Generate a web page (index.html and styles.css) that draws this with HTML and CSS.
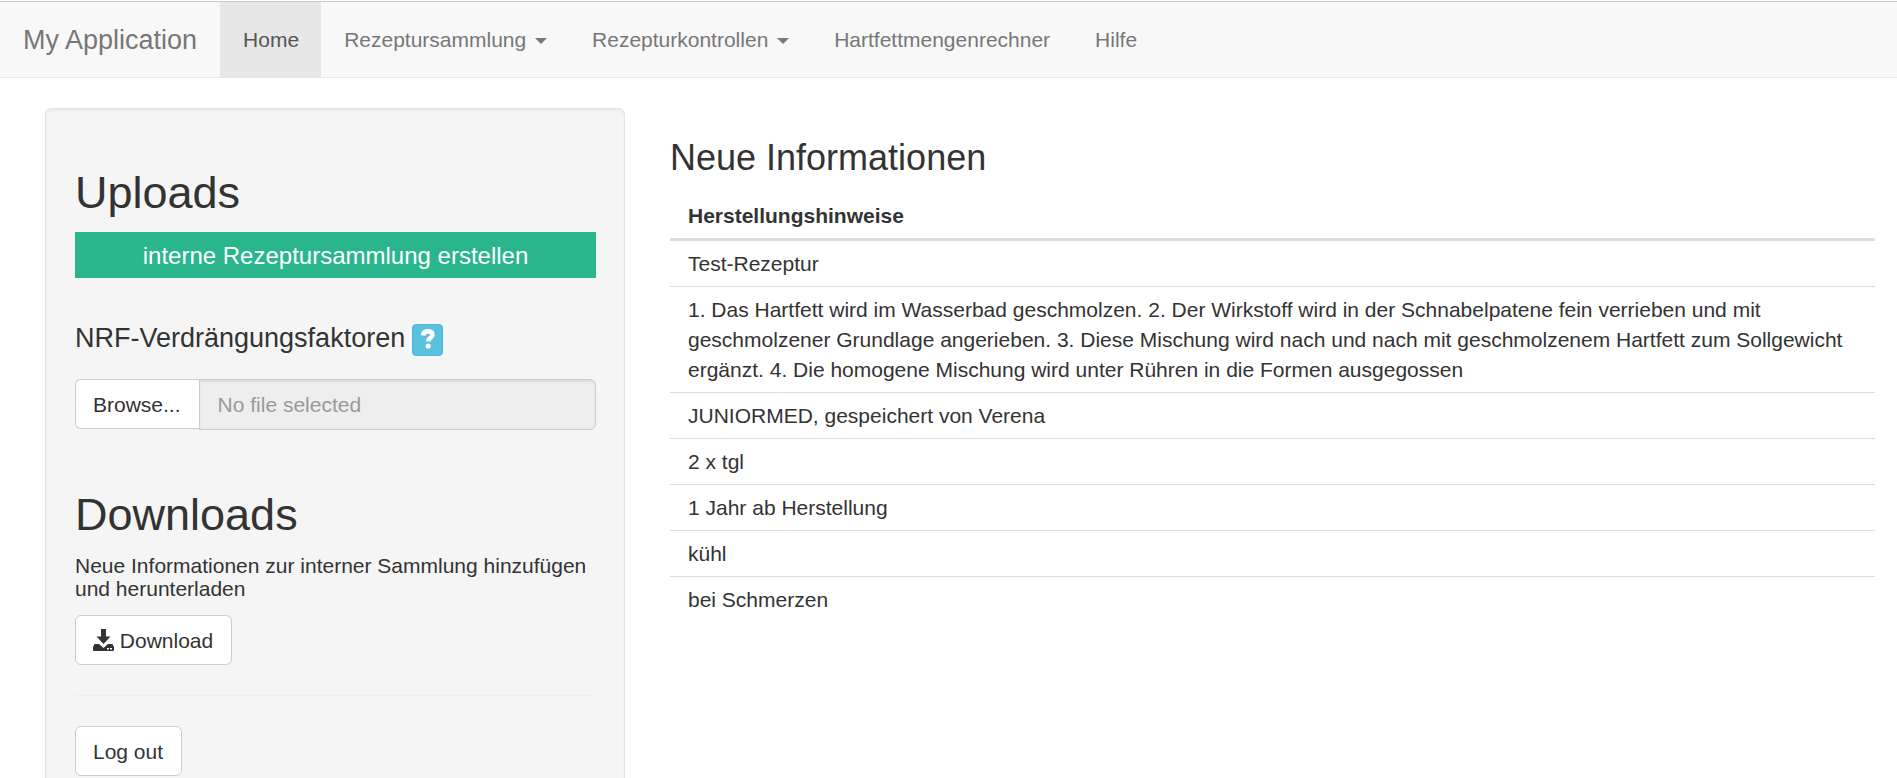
FILE: index.html
```html
<!DOCTYPE html>
<html lang="de">
<head>
<meta charset="utf-8">
<title>My Application</title>
<link rel="stylesheet" href="styles.css">
</head>
<body>
<nav class="navbar">
  <a class="brand" href="#">My Application</a>
  <a class="nav-link active" href="#">Home</a>
  <a class="nav-link" href="#">Rezeptursammlung <span class="caret"></span></a>
  <a class="nav-link" href="#">Rezepturkontrollen <span class="caret"></span></a>
  <a class="nav-link" href="#">Hartfettmengenrechner</a>
  <a class="nav-link" href="#">Hilfe</a>
</nav>
<div class="layout">
  <aside class="sidebar">
    <div class="well">
      <h2 class="section-title">Uploads</h2>
      <button class="create" type="button">interne Rezeptursammlung erstellen</button>
      <div class="upload-head">
        <label class="upload-label" for="file-name">NRF-Verdrängungsfaktoren</label>
        <button class="help" type="button" aria-label="Hilfe">
          <svg width="14" height="20" viewBox="0 0 14 20" fill="none" stroke="#fff"><path d="M2 6.500C2.300 3.600 4.200 2.400 6.800 2.400c2.800 0 4.600 1.300 4.600 3.500 0 3-4.200 3-4.200 6.600" stroke-width="4.600"/><circle cx="7.200" cy="17" r="2.600" fill="#fff" stroke="none"/></svg>
        </button>
      </div>
      <div class="file-group">
        <button class="btn browse" type="button">Browse...</button>
        <input class="file-name" id="file-name" type="text" placeholder="No file selected" readonly>
      </div>
      <h2 class="section-title">Downloads</h2>
      <h5 class="note">Neue Informationen zur interner Sammlung hinzufügen und herunterladen</h5>
      <button class="btn" type="button"><svg class="icon" width="21" height="22" viewBox="0 0 21 22" fill="#333"><path d="M8 0h5v7.500h4.500L10.500 15l-7-7.500H8z"/><path d="M1.500 15H6l4.500 4 4.500-4h4.500l1.500 3v3q0 1-1 1H1q-1 0-1-1v-3z"/><path fill="#fff" d="M14 19h2v1.500h-2zM17 19h2v1.500h-2z"/></svg> Download</button>
      <hr class="rule">
      <button class="btn" type="button">Log out</button>
    </div>
  </aside>
  <main class="main">
    <h3 class="main-title">Neue Informationen</h3>
    <table class="table">
      <thead><tr><th>Herstellungshinweise</th></tr></thead>
      <tbody>
        <tr><td>Test-Rezeptur</td></tr>
        <tr><td>1. Das Hartfett wird im Wasserbad geschmolzen. 2. Der Wirkstoff wird in der Schnabelpatene fein verrieben und mit geschmolzener Grundlage angerieben. 3. Diese Mischung wird nach und nach mit geschmolzenem Hartfett zum Sollgewicht ergänzt. 4. Die homogene Mischung wird unter Rühren in die Formen ausgegossen</td></tr>
        <tr><td>JUNIORMED, gespeichert von Verena</td></tr>
        <tr><td>2 x tgl</td></tr>
        <tr><td>1 Jahr ab Herstellung</td></tr>
        <tr><td>kühl</td></tr>
        <tr><td>bei Schmerzen</td></tr>
      </tbody>
    </table>
  </main>
</div>
</body>
</html>
```
FILE: styles.css
```css
* { box-sizing: border-box; }
html { scrollbar-width: none; }
body {
  margin: 0;
  padding-top: 1px;
  background: #fff;
  color: #333;
  font: 21px/30px "Liberation Sans", Arial, sans-serif;
}
button, input { font: inherit; color: inherit; }
.navbar {
  display: flex;
  height: 77px;
  border-top: 1px solid #c8cac9;
  border-bottom: 1px solid #e7e7e7;
  background: #f8f8f8;
}
.brand, .nav-link {
  padding: 23px 22px 22px 23px;
  color: #777;
  text-decoration: none;
  white-space: nowrap;
}
.brand { padding-right: 23px; font-size: 27px; }
.active { background: #e7e7e7; color: #555; }
.caret {
  display: inline-block;
  margin-left: 3px;
  border-top: 6px solid;
  border-left: 6px solid transparent;
  border-right: 6px solid transparent;
  vertical-align: middle;
}
.layout {
  display: grid;
  grid-template-columns: 1fr 2fr;
  padding: 30px 0 0 22px;
}
.sidebar, .main { padding: 0 22px 0 23px; }
.well {
  min-height: 30px;
  padding: 29px 28px 29px 29px;
  border: 1px solid #e3e3e3;
  border-radius: 6px;
  background: #f5f5f5;
  box-shadow: inset 0 2px 2px rgba(0, 0, 0, 0.05);
}
.section-title {
  margin: 30px 0 15px;
  font-size: 45px;
  font-weight: 400;
  line-height: 49px;
}
.create {
  display: block;
  width: 100%;
  padding: 9px 8px 7px;
  border: 0;
  background: #29b68d;
  color: #fff;
  font-size: 24px;
  text-align: center;
}
.upload-head {
  display: flex;
  align-items: flex-end;
  gap: 7px;
  padding-top: 45px;
}
.upload-label { padding-bottom: 3px; font-size: 27px; line-height: 30px; }
.help {
  display: flex;
  align-items: center;
  justify-content: center;
  width: 31px;
  height: 32px;
  padding: 0 0 2px;
  border: 1px solid #46b8da;
  border-radius: 4px;
  background: #5bc0de;
}
.file-group {
  display: flex;
  align-items: flex-start;
  margin: 23px 0 60px;
}
.btn {
  padding: 10px 18px 8px 17px;
  border: 1px solid #ccc;
  border-radius: 6px;
  background: #fff;
}
.browse { border-right: 0; border-radius: 6px 0 0 6px; }
.file-name {
  flex: 1;
  min-width: 0;
  height: 51px;
  padding: 9px 18px;
  border: 1px solid #ccc;
  border-radius: 0 6px 6px 0;
  background: #eee;
  box-shadow: inset 0 2px 2px rgba(0, 0, 0, 0.075);
}
.file-name::placeholder { color: #999; opacity: 1; }
.note { margin: 15px 0; font-size: 21px; font-weight: 400; line-height: 23px; }
.icon { vertical-align: -3px; }
.rule { margin: 30px 0; border: 0; border-top: 1px solid #eee; }
.main-title {
  margin: 30px 0 15px;
  font-size: 36px;
  font-weight: 400;
  line-height: 40px;
}
.table { width: 100%; border-spacing: 0; }
.table th, .table td { padding: 8px 18px 7px; text-align: left; }
.table th { border-bottom: 3px solid #ddd; }
.table td { border-top: 1px solid #ddd; }
.table tbody tr:first-child td { border-top: 0; }
```
